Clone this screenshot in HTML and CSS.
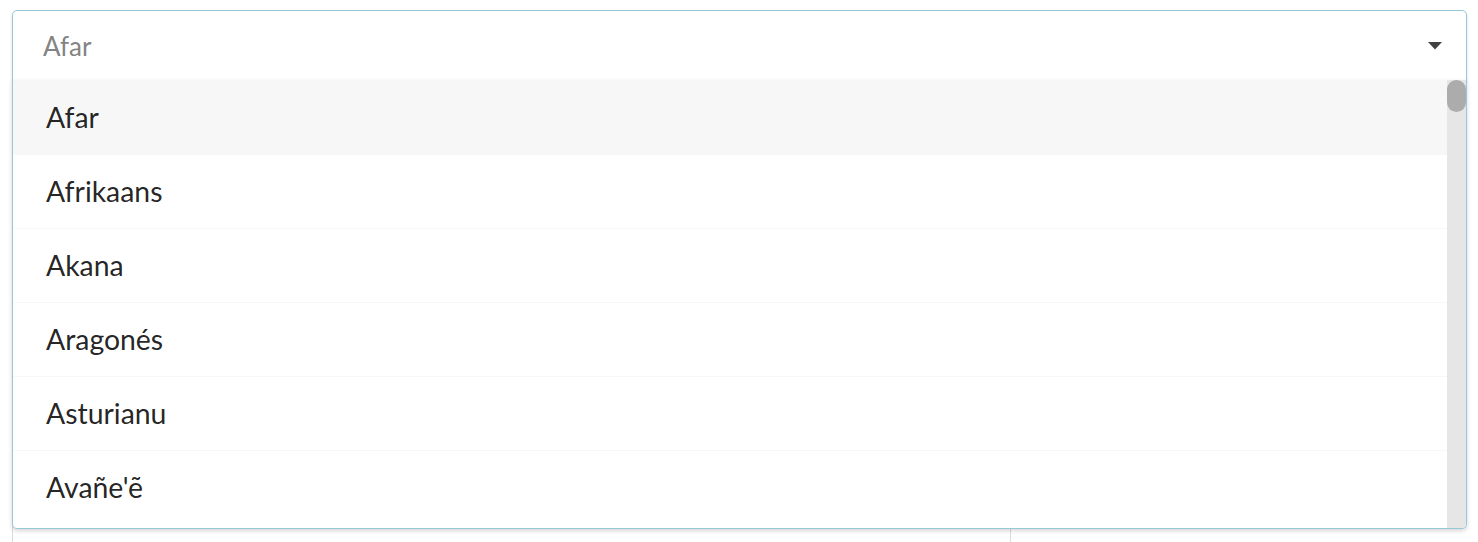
FILE: index.html
```html
<!DOCTYPE html>
<html>
<head>
<meta charset="utf-8">
<link rel="stylesheet" href="styles.css">
</head>
<body>
<div class="page">
  <div class="dropdown">
    <div class="current">Afar</div>
    <svg class="caret" width="14" height="8" viewBox="0 0 14 8"><path d="M0 0 H14 L7 7.5 Z" fill="#404040"/></svg>
    <div class="menu">
      <div class="list">
        <div class="item selected">Afar</div>
        <div class="item">Afrikaans</div>
        <div class="item">Akana</div>
        <div class="item">Aragonés</div>
        <div class="item">Asturianu</div>
        <div class="item">Avañe'ẽ</div>
      </div>
      <div class="scrollbar"><div class="thumb"></div></div>
    </div>
  </div>
  <div class="content">
    <div class="panel"></div>
  </div>
</div>
</body>
</html>
```
FILE: styles.css
```css
html, body {
  margin: 0;
  padding: 0;
  background: #ffffff;
  overflow: hidden;
  height: 542px;
}
body {
  font-family: Lato, "Open Sans", "Liberation Sans", sans-serif;
  color: rgba(0,0,0,.87);
}
.page {
  box-sizing: border-box;
  padding: 10px 11px 0 12px;
  height: 542px;
  display: flex;
  flex-direction: column;
  gap: 20px;
}
.dropdown {
  position: relative;
  height: 71px;
  flex: none;
  box-sizing: border-box;
  border: 1px solid #96c8da;
  border-radius: 5px 5px 0 0;
  box-shadow: 0 2px 3px 0 rgba(34,36,38,.15);
  display: flex;
  align-items: center;
  padding: 0 24px 0 30px;
  z-index: 2;
  background: #fff;
}
.current {
  flex: 1;
  font-size: 26px;
  color: rgba(115,115,115,.9);
  line-height: 1;
  padding-top: 1px;
}
.caret {
  display: block;
  margin-top: 1px;
}
.menu {
  position: absolute;
  left: -1px;
  right: -1px;
  top: 100%;
  height: 449px;
  box-sizing: border-box;
  border: 1px solid #96c8da;
  border-top-width: 0;
  border-radius: 0 0 5px 5px;
  box-shadow: 0 2px 4px 0 rgba(34,36,38,.18);
  background: #fff;
  overflow: hidden;
  display: flex;
}
.list {
  flex: 1;
  overflow: hidden;
}
.item {
  height: 74px;
  box-sizing: border-box;
  border-top: 1px solid #f7f7f7;
  padding: 0 33px;
  display: flex;
  align-items: center;
  font-size: 28.4px;
  line-height: 1;
  color: rgba(0,0,0,.87);
}
.item:first-child {
  border-top-color: transparent;
}
.item.selected {
  background: #f7f7f7;
}
.scrollbar {
  width: 19px;
  background: #e6e6e6;
  display: flex;
  flex-direction: column;
}
.thumb {
  height: 32px;
  border-radius: 10px;
  background: #acacac;
}
.content {
  flex: 1;
  display: flex;
  min-height: 0;
}
.panel {
  width: 999px;
  box-sizing: border-box;
  border: 1px solid #dcdcdd;
  border-bottom: none;
  border-radius: 4px 4px 0 0;
  background: #fff;
}
```
